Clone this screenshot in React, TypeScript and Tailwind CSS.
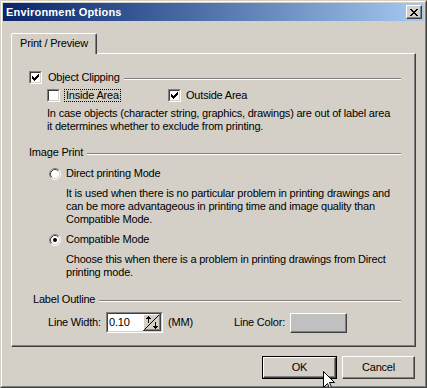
import type { ReactNode } from "react";

const FONT = "font-['Liberation_Sans',Arial,sans-serif] text-[11px] leading-[13px] tracking-[-0.2px] text-black";

const checkPixels: [number, number, number][] = [
  [0, 6, 1],
  [1, 5, 2],
  [2, 0, 1],
  [2, 4, 3],
  [3, 0, 2],
  [3, 3, 3],
  [4, 0, 5],
  [5, 1, 3],
  [6, 2, 1],
];

const xPixels: [number, number, number][] = [
  [0, 0, 2],
  [0, 6, 2],
  [1, 1, 2],
  [1, 5, 2],
  [2, 2, 4],
  [3, 3, 2],
  [4, 2, 4],
  [5, 1, 2],
  [5, 5, 2],
  [6, 0, 2],
  [6, 6, 2],
];

function Check({ on }: { on?: boolean }) {
  return (
    <span className="box-border flex size-[13px] shrink-0 border border-t-[#808080] border-l-[#808080] border-r-white border-b-white">
      <span className="flex flex-1 items-center justify-center border border-t-[#404040] border-l-[#404040] border-r-[#d4d0c8] border-b-[#d4d0c8] bg-white">
        {on ? (
          <svg width="7" height="7" viewBox="0 0 7 7" shapeRendering="crispEdges">
            {checkPixels.map(([y, x, w]) => (
              <rect key={`${y}-${x}`} x={x} y={y} width={w} height={1} fill="#000" />
            ))}
          </svg>
        ) : null}
      </span>
    </span>
  );
}

function Radio({ on }: { on?: boolean }) {
  return (
    <svg width="12" height="12" viewBox="0 0 12 12" className="shrink-0">
      <circle cx="6" cy="6" r="5" fill="#fff" />
      <path d="M2.11 9.89 A5.5 5.5 0 0 1 9.89 2.11" fill="none" stroke="#808080" />
      <path d="M9.89 2.11 A5.5 5.5 0 0 1 2.11 9.89" fill="none" stroke="#fff" />
      <path d="M2.82 9.18 A4.5 4.5 0 0 1 9.18 2.82" fill="none" stroke="#404040" />
      <path d="M9.18 2.82 A4.5 4.5 0 0 1 2.82 9.18" fill="none" stroke="#d4d0c8" />
      {on ? <circle cx="6" cy="6" r="2" fill="#000" /> : null}
    </svg>
  );
}

function GroupHeader({ children }: { children: ReactNode }) {
  return (
    <div className="flex h-[13px] items-center">
      {children}
      <div className="ml-[4px] mt-[3px] h-[2px] flex-1 border-t border-b border-t-[#808080] border-b-white" />
    </div>
  );
}

function Raised({ className, children }: { className?: string; children?: ReactNode }) {
  return (
    <div
      className={`box-border flex items-center justify-center border border-t-white border-l-white border-r-[#404040] border-b-[#404040] shadow-[inset_-1px_-1px_0_#808080] ${className ?? ""}`}
    >
      {children}
    </div>
  );
}

function Spinner() {
  return (
    <svg width="18" height="17" viewBox="0 0 18 17" shapeRendering="crispEdges" className="shrink-0">
      <rect x="0" y="0" width="18" height="17" fill="#d4d0c8" />
      <rect x="0" y="0" width="17" height="1" fill="#fff" />
      <rect x="0" y="0" width="1" height="16" fill="#fff" />
      <rect x="0" y="16" width="18" height="1" fill="#404040" />
      <rect x="17" y="0" width="1" height="17" fill="#404040" />
      <rect x="1" y="15" width="16" height="1" fill="#808080" />
      <rect x="16" y="1" width="1" height="15" fill="#808080" />
      <path d="M1.5 15.5 L16.5 0.5" stroke="#000" strokeWidth="1" shapeRendering="auto" />
      {/* up arrow */}
      <rect x="5" y="2" width="1" height="7" fill="#000" />
      <rect x="4" y="3" width="3" height="1" fill="#000" />
      <rect x="3" y="4" width="5" height="1" fill="#000" />
      {/* down arrow */}
      <rect x="12" y="8" width="1" height="7" fill="#000" />
      <rect x="11" y="13" width="3" height="1" fill="#000" />
      <rect x="10" y="12" width="5" height="1" fill="#000" />
    </svg>
  );
}

export default function App() {
  return (
    <div className={`relative box-border flex h-[388px] w-[427px] flex-col overflow-hidden border border-t-[#d4d0c8] border-l-[#d4d0c8] border-r-[#404040] border-b-[#404040] bg-[#d4d0c8] ${FONT}`}>
      <div className="box-border flex flex-1 flex-col border border-t-white border-l-white border-r-[#808080] border-b-[#808080] p-[1px]">
        {/* title bar */}
        <div className="flex h-[18px] shrink-0 items-center bg-gradient-to-r from-[#0a246a] to-[#a6caf0] pl-[3px] pr-[2px]">
          <span className="flex-1 text-[11px] font-bold tracking-[0.2px] text-white">Environment Options</span>
          <Raised className="h-[14px] w-[16px] bg-[#d4d0c8]">
            <svg width="8" height="7" viewBox="0 0 8 7" shapeRendering="crispEdges">
              {xPixels.map(([y, x, w]) => (
                <rect key={`${y}-${x}`} x={x} y={y} width={w} height={1} fill="#000" />
              ))}
            </svg>
          </Raised>
        </div>

        <div className="flex flex-1 flex-col px-[8px]">
          {/* tab strip */}
          <div className="mt-[12px] flex">
            <div className="relative z-10 -mb-[1px] box-border flex h-[21px] w-[86px] items-start justify-center rounded-t-[2px] border border-b-0 border-t-white border-l-white border-r-[#404040] bg-[#d4d0c8] pt-[3px] shadow-[inset_-1px_0_0_#808080]">
              Print / Preview
            </div>
          </div>

          {/* tab panel */}
          <div className="box-border flex h-[294px] flex-col border border-t-white border-l-white border-r-[#404040] border-b-[#404040] pl-[17px] pr-[14px] shadow-[inset_-1px_-1px_0_#808080]">
            <div className="mt-[17px]">
              <GroupHeader>
                <Check on />
                <span className="ml-[6px]">Object Clipping</span>
              </GroupHeader>
            </div>

            <div className="mt-[5px] flex h-[13px] items-center pl-[18px]">
              <div className="flex w-[121px] items-center">
                <Check />
                <span className="ml-[4px] border border-dotted border-black px-[1px] leading-[11px]">Inside Area</span>
              </div>
              <Check on />
              <span className="ml-[5px]">Outside Area</span>
            </div>

            <p className="mt-[5px] pl-[18px]">
              In case objects (character string, graphics, drawings) are out of label area
              <br />
              it determines whether to exclude from printing.
            </p>

            <div className="mt-[13px]">
              <GroupHeader>
                <span>Image Print</span>
              </GroupHeader>
            </div>

            <div className="mt-[8px] flex h-[13px] items-center pl-[20px]">
              <Radio />
              <span className="ml-[5px]">Direct printing Mode</span>
            </div>
            <p className="mt-[7px] pl-[37px]">
              It is used when there is no particular problem in printing drawings and
              <br />
              can be more advantageous in printing time and image quality than
              <br />
              Compatible Mode.
            </p>

            <div className="mt-[7px] flex h-[13px] items-center pl-[20px]">
              <Radio on />
              <span className="ml-[5px]">Compatible Mode</span>
            </div>
            <p className="mt-[7px] pl-[37px]">
              Choose this when there is a problem in printing drawings from Direct
              <br />
              printing mode.
            </p>

            <div className="mt-[14px] pl-[4px]">
              <GroupHeader>
                <span>Label Outline</span>
              </GroupHeader>
            </div>

            <div className="mt-[6px] flex items-center pl-[19px]">
              <span className="w-[58px]">Line Width:</span>
              <div className="box-border flex h-[21px] w-[57px] border border-t-[#808080] border-l-[#808080] border-r-white border-b-white">
                <div className="flex flex-1 items-center border border-t-[#404040] border-l-[#404040] border-r-[#d4d0c8] border-b-[#d4d0c8] bg-white pl-[1px]">
                  <span className="flex-1">0.10</span>
                  <Spinner />
                </div>
              </div>
              <span className="ml-[5px] w-[66px]">(MM)</span>
              <span className="w-[56px]">Line Color:</span>
              <Raised className="h-[20px] w-[57px] bg-[#c0c0c0]" />
            </div>
          </div>

          {/* buttons */}
          <div className="mt-[9px] flex justify-end gap-[5px] pr-[1px]">
            <div className="box-border h-[23px] w-[75px] border border-black">
              <Raised className="h-full w-full">OK</Raised>
            </div>
            <Raised className="h-[23px] w-[73px]">Cancel</Raised>
          </div>
        </div>
      </div>

      {/* mouse pointer */}
      <svg width="13" height="20" viewBox="0 0 13 20" className="absolute left-[322px] top-[370px]">
        <path d="M0.5 0.5 L0.5 16.5 L4.5 12.5 L7 18.5 L9 17.5 L6.5 11.5 L11.5 11.5 Z" fill="#fff" stroke="#000" strokeWidth="1" strokeLinejoin="miter" />
      </svg>
    </div>
  );
}
